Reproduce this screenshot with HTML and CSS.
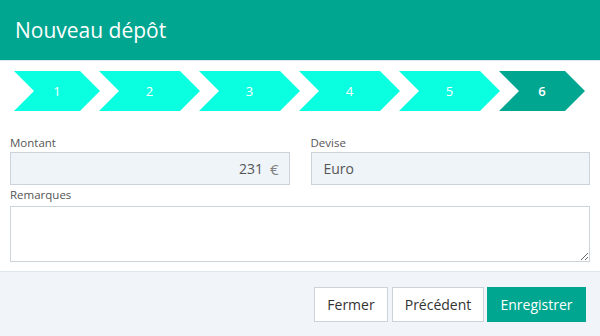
FILE: index.html
```html
<!DOCTYPE html>
<html lang="fr">
<head>
    <meta charset="UTF-8">
    <meta name="viewport" content="width=device-width, initial-scale=1.0">
    <title>Nouveau dépôt</title>
    <link rel="stylesheet" href="styles.css">
</head>
<body>
    <div class="modal">
        <div class="modal-header">Nouveau dépôt</div>

        <div class="steps">
            <div class="step step-first">1</div>
            <div class="step">2</div>
            <div class="step">3</div>
            <div class="step">4</div>
            <div class="step">5</div>
            <div class="step step-last active">6</div>
        </div>

        <div class="modal-body">
            <div class="row">
                <div class="field">
                    <label>Montant</label>
                    <div class="input input-amount"><span>231</span><span class="currency">€</span></div>
                </div>
                <div class="field">
                    <label>Devise</label>
                    <div class="input">Euro</div>
                </div>
            </div>
            <div class="field field-notes">
                <label>Remarques</label>
                <textarea class="textarea"></textarea>
            </div>
        </div>

        <div class="modal-footer">
            <button class="btn btn-close">Fermer</button>
            <button class="btn btn-prev">Précédent</button>
            <button class="btn btn-primary">Enregistrer</button>
        </div>
    </div>
</body>
</html>
```

FILE: styles.css
```css
body { margin: 0; font-family: "Open Sans", Arial, sans-serif; background: #fff; }
.modal { width: 600px; height: 336px; display: flex; flex-direction: column; }

.modal-header { height: 60px; background: #00a690; color: #fff; font-size: 21px; padding-left: 15px; display: flex; align-items: center; border-bottom: 1px solid #dfe6ec; }

.steps { display: flex; margin: 10px 0 0 14px; height: 40px; }
.step { width: 101px; margin-right: -1px; height: 40px; background: #0affe0; color: #fff; font-size: 13px; display: flex; align-items: center; justify-content: center; padding-left: 20px; padding-right: 20px; box-sizing: border-box;
    clip-path: polygon(0 0, calc(100% - 20px) 0, 100% 50%, calc(100% - 20px) 100%, 0 100%, 20px 50%); }
.step-first { width: 86px; }
.step-last { width: 86px; }
.step.active { background: #00a690; font-weight: 600; }

.modal-body { padding: 24px 10px 0 10px; }
.row { display: flex; gap: 21px; }
.row .field { flex: 1; }
label { display: block; font-size: 11.5px; line-height: 16px; color: #555; }
.input { margin-top: 1px; height: 33px; box-sizing: border-box; background: #eff4f9; border: 1px solid #cdd3da; font-size: 14px; color: #555; display: flex; align-items: center; padding: 0 12px; }
.input-amount { justify-content: flex-end; padding-right: 10px; }
.currency { margin-left: 7px; font-size: 15px; color: #808080; }
.field-notes { margin-top: 2px; }
.textarea { display: block; margin-top: 3px; width: 100%; height: 56px; box-sizing: border-box; border: 1px solid #cdd3da; resize: vertical; font-family: inherit; }

.modal-footer { margin-top: 9px; flex: 1; background: #f1f5f9; border-top: 1px solid #dfe6ec; display: flex; justify-content: flex-end; align-items: flex-start; gap: 3px; padding: 15px 14px 0 0; }
.btn { height: 35px; padding: 0; font-family: inherit; font-size: 14px; color: #333; background: #fff; border: 1px solid #cdd3da; }
.btn-close { width: 74px; margin-right: 1px; }
.btn-prev { width: 92px; }
.btn-primary { width: 99px; background: #00a690; border-color: #00a690; color: #fff; }
```
